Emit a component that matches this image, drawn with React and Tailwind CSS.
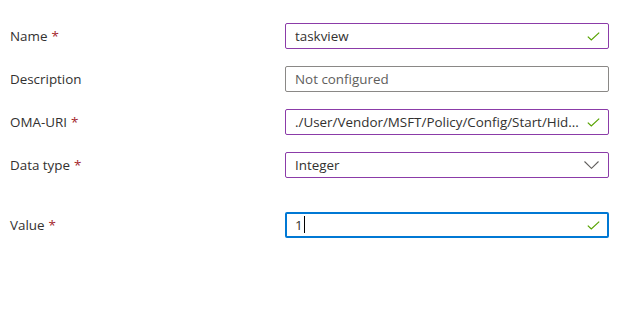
function Check() {
  return (
    <svg width="13" height="9" viewBox="0 0 13 9" className="shrink-0">
      <path d="M0.8 4.6 L4.3 8 L12.2 0.6" fill="none" stroke="#57a300" strokeWidth="1.2" />
    </svg>
  )
}

function Chevron() {
  return (
    <svg width="15" height="8" viewBox="0 0 15 8" className="mr-[1px] shrink-0">
      <path d="M0.5 0.5 L7.5 7.3 L14.5 0.5" fill="none" stroke="#605e5c" strokeWidth="1.1" />
    </svg>
  )
}

function Label({ text, required }) {
  return (
    <div className="w-[275px] shrink-0 text-[13.4px] text-[#323130]">
      {text}
      {required && <span className="ml-1 text-[#a4262c]">*</span>}
    </div>
  )
}

function Field({ children, border = 'border-[#8b3ba8]', right }) {
  return (
    <div className={`flex h-[26px] w-[324px] items-center rounded-[2px] border ${border} pl-[9px] pr-[8px]`}>
      <div className="flex-1 overflow-hidden whitespace-nowrap text-[13.4px] text-[#323130]">{children}</div>
      {right}
    </div>
  )
}

export default function App() {
  return (
    <div
      className="h-[310px] w-[626px] bg-white pl-[10px] pt-[23px]"
      style={{ fontFamily: '"Open Sans", "Noto Sans", sans-serif' }}
    >
      <div className="flex items-center">
        <Label text="Name" required />
        <Field right={<Check />}>taskview</Field>
      </div>
      <div className="mt-[17px] flex items-center">
        <Label text="Description" />
        <Field border="border-[#8a8886]">
          <span className="text-[#605e5c]">Not configured</span>
        </Field>
      </div>
      <div className="mt-[17px] flex items-center">
        <Label text="OMA-URI" required />
        <Field right={<Check />}>./User/Vendor/MSFT/Policy/Config/Start/Hid...</Field>
      </div>
      <div className="mt-[17px] flex items-center">
        <Label text="Data type" required />
        <Field right={<Chevron />}>Integer</Field>
      </div>
      <div className="mt-[34px] flex items-center">
        <Label text="Value" required />
        <div className="flex h-[26px] w-[324px] items-center rounded-[2px] border-2 border-[#0078d4] pl-[8px] pr-[7px]">
          <div className="flex flex-1 items-center text-[13.4px] text-[#323130]">
            1<span className="ml-px inline-block h-[17px] w-px bg-black" />
          </div>
          <Check />
        </div>
      </div>
    </div>
  )
}
